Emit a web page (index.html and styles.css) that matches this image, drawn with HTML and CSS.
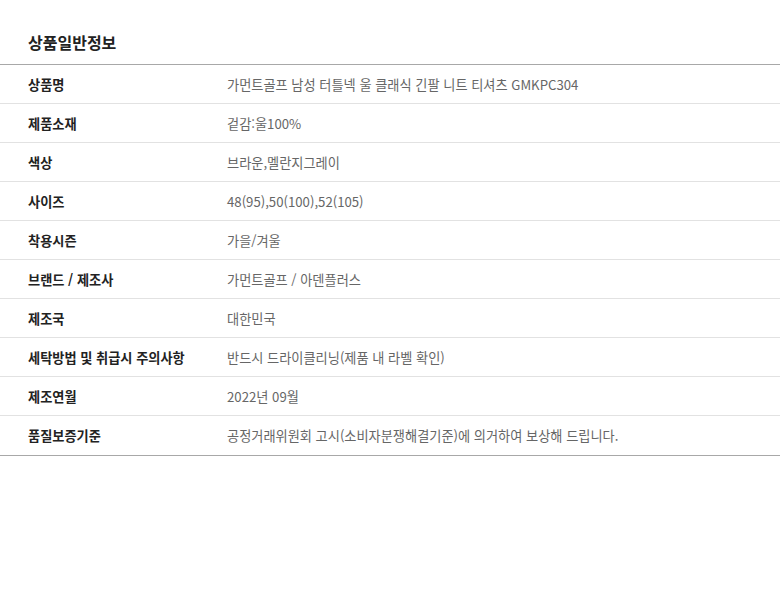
FILE: index.html
```html
<!DOCTYPE html>
<html lang="ko">
<head>
<meta charset="utf-8">
<link rel="stylesheet" href="styles.css">
</head>
<body>
<section class="info">
  <h2 class="info-title">상품일반정보</h2>
  <table class="info-table">
    <tr><th>상품명</th><td>가먼트골프 남성 터틀넥 울 클래식 긴팔 니트 티셔츠 GMKPC304</td></tr>
    <tr><th>제품소재</th><td>겉감:울100%</td></tr>
    <tr><th>색상</th><td>브라운,멜란지그레이</td></tr>
    <tr><th>사이즈</th><td>48(95),50(100),52(105)</td></tr>
    <tr><th>착용시즌</th><td>가을/겨울</td></tr>
    <tr><th>브랜드 / 제조사</th><td>가먼트골프 / 아덴플러스</td></tr>
    <tr><th>제조국</th><td>대한민국</td></tr>
    <tr><th>세탁방법 및 취급시 주의사항</th><td>반드시 드라이클리닝(제품 내 라벨 확인)</td></tr>
    <tr><th>제조연월</th><td>2022년 09월</td></tr>
    <tr class="last"><th>품질보증기준</th><td>공정거래위원회 고시(소비자분쟁해결기준)에 의거하여 보상해 드립니다.</td></tr>
  </table>
</section>
</body>
</html>
```

FILE: styles.css
```css
html, body {
  margin: 0;
  padding: 0;
  background: #fff;
}
body {
  font-family: "Noto Sans CJK KR", "Noto Sans", sans-serif;
  color: #222;
}
.info-title {
  margin: 0;
  padding: 31px 28px 0;
  height: 33px;
  font-size: 16px;
  font-weight: 700;
  line-height: 22px;
  color: #222;
}
.info-table {
  width: 100%;
  border-collapse: collapse;
  border-top: 1px solid #a8a8a8;
  border-bottom: 1px solid #a8a8a8;
}
.info-table tr {
  height: 39px;
}
.info-table tr.last {
  height: 40px;
}
.info-table tr + tr {
  border-top: 1px solid #e2e2e2;
}
.info-table th {
  width: 199px;
  padding: 0 0 0 28px;
  text-align: left;
  font-size: 13.2px;
  font-weight: 700;
  color: #222;
  vertical-align: middle;
}
.info-table td {
  padding: 0;
  font-size: 13.2px;
  font-weight: 400;
  color: #666;
  vertical-align: middle;
}
```
